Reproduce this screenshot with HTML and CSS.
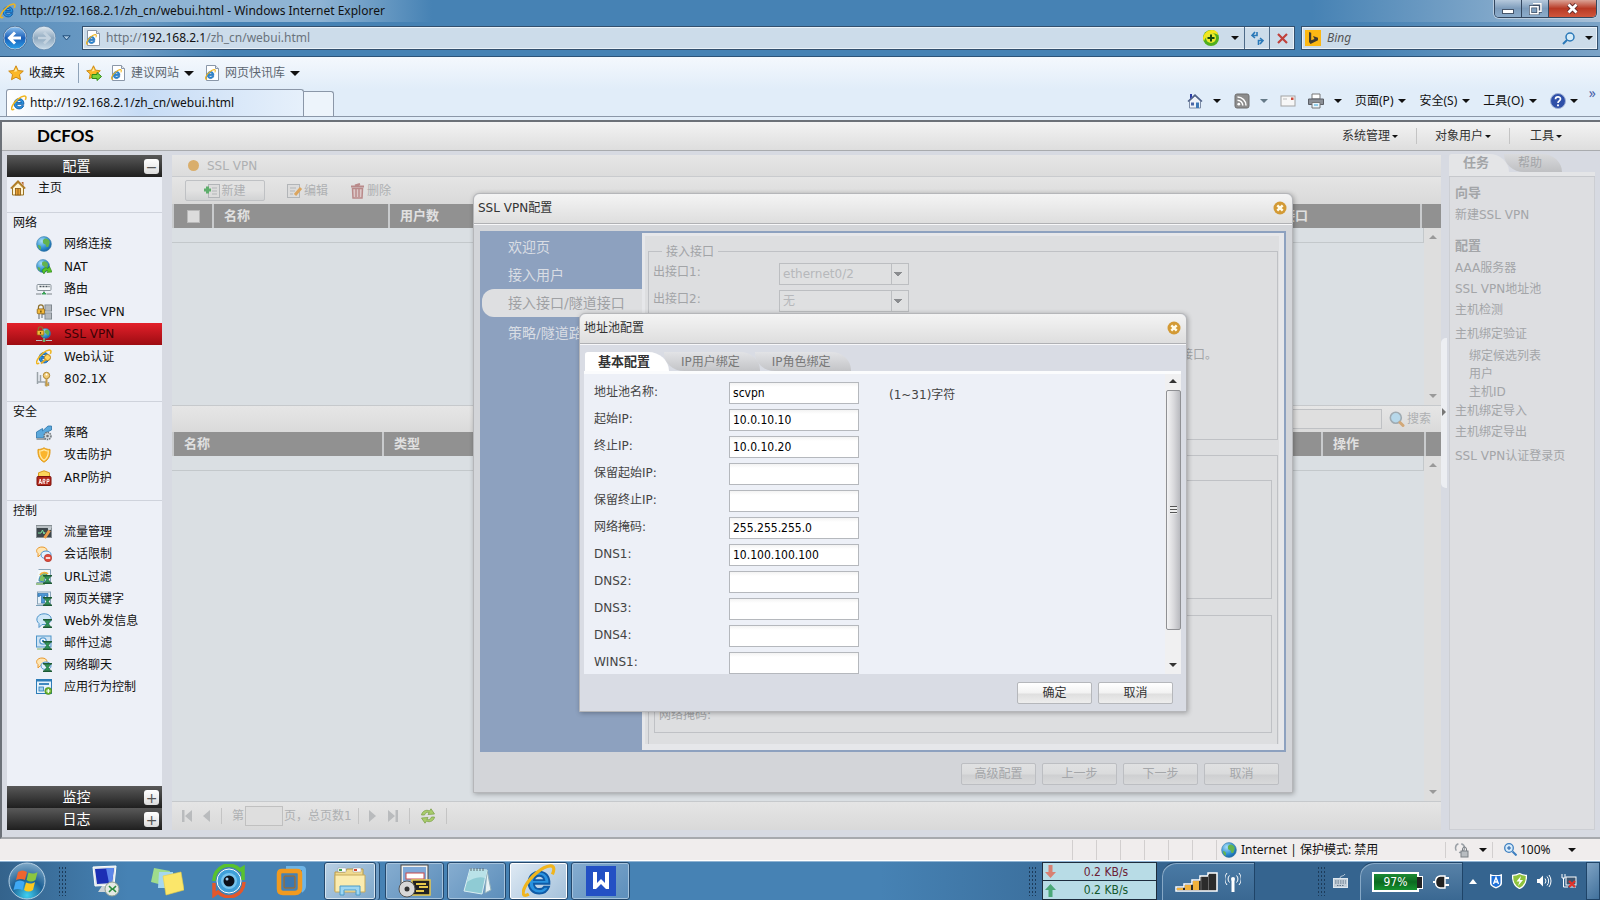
FILE: index.html
```
<!DOCTYPE html>
<html lang="zh-CN">
<head>
    <meta charset="utf-8">
    <meta name="viewport" content="width=device-width, initial-scale=1.0">
    <title>DCFOS</title>
    <link rel="stylesheet" href="styles.css">
</head>
<body>
    <!-- shared icons -->
    <svg class="sprite" aria-hidden="true">
        <defs>
            <linearGradient id="gBlue" x1="0" y1="0" x2="0" y2="1"><stop offset="0" stop-color="#8fc4f2"/><stop offset=".5" stop-color="#1b5fb8"/><stop offset="1" stop-color="#2aa0ea"/></linearGradient>
            <linearGradient id="gGrey" x1="0" y1="0" x2="0" y2="1"><stop offset="0" stop-color="#dfe8ef"/><stop offset=".5" stop-color="#8fa9c0"/><stop offset="1" stop-color="#c9dbe8"/></linearGradient>
            <radialGradient id="gGlobe" cx=".35" cy=".3" r=".8"><stop offset="0" stop-color="#a8defa"/><stop offset=".6" stop-color="#2f8fd0"/><stop offset="1" stop-color="#125a9c"/></radialGradient>
            <radialGradient id="gStart" cx=".5" cy=".9" r=".9"><stop offset="0" stop-color="#3fd0f0"/><stop offset=".5" stop-color="#1c5f94"/><stop offset="1" stop-color="#7fa9c8"/></radialGradient>
        </defs>
        <symbol id="i-ie" viewBox="0 0 16 16">
            <path d="M12.900 9.300H5.600c.1 1.600 1.200 2.500 2.600 2.500 1 0 1.800-.4 2.200-1.100h2.300c-.7 2-2.400 3.200-4.600 3.200-2.900 0-5-2.100-5-5.100s2.100-5.200 5-5.200c3 0 5 2.200 4.800 5.700zM5.700 7.600h4.800C10.300 6.300 9.400 5.500 8.100 5.500S5.900 6.300 5.700 7.600z" fill="#2a93e0" stroke="#0f5aa6" stroke-width=".9"/>
            <path d="M3.200 14.200C.5 15.800-.3 14 1.600 10.400 4 6 9.500 1.200 13.300.9c1.900-.1 2.100 1.700 1 4" fill="none" stroke="#f0b51e" stroke-width="1.500"/>
        </symbol>
        <symbol id="i-iepage" viewBox="0 0 16 16">
            <path d="M2.500.5h9l3 3v12h-12z" fill="#fff" stroke="#8a97a8"/><path d="M11.500.5v3h3" fill="#e3e8ee" stroke="#8a97a8"/>
            <use href="#i-ie" x="1" y="4" width="11" height="11"/>
        </symbol>
        <symbol id="i-star" viewBox="0 0 16 16"><path d="M8 .8l2.200 4.700 5.100.6-3.800 3.500 1 5.100L8 12.200l-4.500 2.500 1-5.100L.7 6.100l5.100-.6z" fill="#fcb827" stroke="#c98209" stroke-width=".9"/><path d="M8 3l1.300 3.200-3.300.6z" fill="#ffe9a0"/></symbol>
        <symbol id="i-globe" viewBox="0 0 16 16"><circle cx="8" cy="8" r="7.400" fill="url(#gGlobe)" stroke="#3b7da8" stroke-width=".6"/><path d="M7.500 3.500c2-1.800 4.500-1 6 1.500.6 2-.5 3.500-1 5.500-1 1-2.500.6-2.500-1S7 8 7 6.500s-.5-2 .5-3z" fill="#63b34e"/><path d="M2 9c1.500 0 3 1 3 2.500S5 14 4 13.500 2 11 2 9z" fill="#63b34e"/></symbol>
        <symbol id="i-lock" viewBox="0 0 16 16"><path d="M3 6V4a3 3 0 016 0v2" fill="none" stroke="#8c7030" stroke-width="1.500"/><rect x="1.500" y="6" width="9" height="6" rx="1" fill="#f3b93a" stroke="#8f6412"/><rect x="5.200" y="8" width="1.600" height="2.500" fill="#5a4008"/></symbol>
        <symbol id="i-nat" viewBox="0 0 16 16"><use href="#i-globe" width="14" height="14"/><path d="M6 12c1-3 4-4 6-2.500l1.500-2L16 13l-5 .5 1-1.500c-1.500-1-3 0-4 3z" fill="#56c528" stroke="#2a7d12" stroke-width=".6"/></symbol>
        <symbol id="i-route" viewBox="0 0 16 16"><rect x="1" y="3.500" width="14" height="6" rx="1" fill="#f6f8fa" stroke="#8a949c"/><path d="M3.500 5.500h2m1 0h2m1 0h2m1 0h1" stroke="#4b555c" stroke-width="1.500"/><path d="M0 13h5.500m5 0H16M8 9.500V12" stroke="#7c8489"/><path d="M6 13h4l-2-2z" fill="#3aa257" stroke="#3aa257"/></symbol>
        <symbol id="i-ipsec" viewBox="0 0 16 16"><rect x="9" y="1" width="6.500" height="6" fill="#c8cdd2" stroke="#7e868d"/><rect x="9" y="9" width="6.500" height="6" fill="#c8cdd2" stroke="#7e868d"/><path d="M9 3h6.500M9 5h6.500M9 11h6.500M9 13h6.500" stroke="#8f979d" stroke-width=".7"/><path d="M3 15v-5m3 4v-4h3" stroke="#7e868d" stroke-width="1.300" fill="none"/><use href="#i-lock" x="0" y="0" width="13" height="13"/></symbol>
        <symbol id="i-ssl" viewBox="0 0 16 16"><use href="#i-globe" x="4" y="2" width="11" height="11"/><use href="#i-lock" x="0" y="0" width="12" height="12"/><path d="M0 14.500h6m4 0h6M8 12v3" stroke="#b9bfc4"/><circle cx="8" cy="14.500" r="1.500" fill="#6bb36f"/></symbol>
        <symbol id="i-webauth" viewBox="0 0 16 16"><use href="#i-ie" width="16" height="16"/><circle cx="11.500" cy="8.500" r="3" fill="#ffd765" stroke="#b8851a"/><path d="M9.500 10.500L5 14.500" stroke="#e2ab2d" stroke-width="2"/></symbol>
        <symbol id="i-dot1x" viewBox="0 0 16 16"><path d="M1.500 1v12m0-2h3V4m0 7h5v4m3-4v4" stroke="#9aa2a8" stroke-width="1.500" fill="none"/><circle cx="10.500" cy="4.500" r="3.200" fill="#f2cd7a" stroke="#ad8530"/><path d="M10.500 8v7.500m0-2h2.500" stroke="#c79d48" stroke-width="2"/><circle cx="10.500" cy="3.600" r="1" fill="#fff"/></symbol>
        <symbol id="i-policy" viewBox="0 0 16 16"><path d="M.5 13V7l6-3.500V6L12 1h3.500v4L9 8v5z" fill="#5aa8dc" stroke="#2e74a8" stroke-width=".8"/><path d="M.5 14h9" stroke="#9aa2a8" stroke-width="2"/><circle cx="11.500" cy="11" r="3.500" fill="#d5dade" stroke="#6c747a" stroke-dasharray="1.500 .8" stroke-width="1.500"/><circle cx="11.500" cy="11" r="1.300" fill="#6c747a"/></symbol>
        <symbol id="i-shield" viewBox="0 0 16 16"><path d="M8 .8c2 1.300 4 1.700 6 1.600.3 6-1 10-6 12.800C3 12.400 1.700 8.400 2 2.400 4 2.500 6 2.100 8 .8z" fill="#fbb52c" stroke="#e09a1b"/><path d="M8 2.800c1.500 1 3 1.300 4.300 1.200.1 4.500-1 7.200-4.300 9.200-3.300-2-4.400-4.700-4.300-9.200C5 4.100 6.500 3.800 8 2.800z" fill="none" stroke="#ffe9a8" stroke-width="1.200"/></symbol>
        <symbol id="i-flow" viewBox="0 0 16 16"><rect x=".5" y="1.500" width="15" height="12" fill="#3d464b" stroke="#868e93"/><path d="M.5 3h15" stroke="#b9c0c4" stroke-width="2"/><path d="M2 9h3l1.500-3L8 10l1-2" fill="none" stroke="#7fe0a0"/><path d="M13.500 6.500L8.500 14" stroke="#e89b4a" stroke-width="3"/><path d="M12 5l3-.5" stroke="#c6cdd2" stroke-width="2.500"/></symbol>
        <symbol id="i-chat" viewBox="0 0 16 16"><path d="M6 1c3 0 5 1.500 5 3.800S9 8.500 6 8.500H4.500L2 11V7.500C-1 5 1 1 6 1z" fill="#ffe6b4" stroke="#e8982e"/><path d="M10 5c3 0 5 1.500 5 3.800s-1.500 3.700-5 3.700c-3.500 0-5-1.500-5-3.700S7 5 10 5z" fill="#e2f0fd" stroke="#4d93d0"/></symbol>
        <symbol id="i-talk" viewBox="0 0 16 16"><use href="#i-chat" width="16" height="16"/><circle cx="12" cy="12" r="3.700" fill="#de4a3c" stroke="#a52d22" stroke-width=".6"/><path d="M9.800 12h4.400" stroke="#fff" stroke-width="1.600"/></symbol>
        <symbol id="i-funnel" viewBox="0 0 10 10"><path d="M0 .8h10M0 9.200h10" stroke="#1d5b35" stroke-width="1.500"/><path d="M1.500 1.500h7L6 5l2.500 3.500h-7L4 5z" fill="#2f9456" stroke="#1d5b35" stroke-width=".7"/></symbol>
        <symbol id="i-url" viewBox="0 0 16 16"><path d="M2.500.5h12v13h-14" fill="#f3f8fb" stroke="#8aa4b8"/><path d="M0 15h9" stroke="#7db069" stroke-width="1.500"/><path d="M3 12c0-5 3-8 8-8l-3 9z" fill="#7fc15f" stroke="#3b86bb"/><path d="M4 6c2-3 6-3 8-1" fill="none" stroke="#f0b33a" stroke-width="1.800"/><use href="#i-funnel" x="7" y="6" width="9" height="9"/></symbol>
        <symbol id="i-key" viewBox="0 0 16 16"><rect x="1.500" y="1" width="13" height="12" fill="#e8f2fa" stroke="#8aa4b8"/><path d="M2 2.500h10v3h-1.500V4.500h-2V12H5.500V4.500h-2v1H2z" fill="#4c97d6" stroke="#1e65a5" stroke-width=".6"/><path d="M0 14.500h9" stroke="#7aa0b8"/><use href="#i-funnel" x="7" y="6" width="9" height="9"/></symbol>
        <symbol id="i-post" viewBox="0 0 16 16"><path d="M8 .8c4.500 0 7.200 2.200 7.200 5.400S12.500 11.500 8 11.500H6L3 14.500v-4C-1.500 7 1.500.8 8 .8z" fill="#cfe7f8" stroke="#4d93c8"/><use href="#i-funnel" x="7" y="6" width="9" height="9"/></symbol>
        <symbol id="i-mail" viewBox="0 0 16 16"><rect x=".5" y="1" width="14.500" height="11" fill="#cfe3f3" stroke="#4d93c8"/><circle cx="7" cy="6" r="3.200" fill="#fff" stroke="#5c9fd3" stroke-width="1.300"/><circle cx="7" cy="6" r="1.200" fill="#3b82bb"/><path d="M1 14h8" stroke="#7db069"/><use href="#i-funnel" x="7" y="6" width="9" height="9"/></symbol>
        <symbol id="i-im" viewBox="0 0 16 16"><use href="#i-chat" width="16" height="16"/><use href="#i-funnel" x="7" y="6" width="9" height="9"/></symbol>
        <symbol id="i-app" viewBox="0 0 16 16"><rect x=".5" y=".5" width="15" height="14" fill="#e6f2fb" stroke="#2d7db8"/><path d="M.5 1.500h15" stroke="#2d7db8" stroke-width="2"/><path d="M3 5h10" stroke="#2d7db8" stroke-width="1.800"/><rect x="3" y="8" width="4.500" height="4" fill="#9fd0ee" stroke="#2d7db8" stroke-width=".8"/><circle cx="12.300" cy="12" r="3.500" fill="#6ab32f" stroke="#3f7f14" stroke-width=".6"/><path d="M10.300 12h4m-2-2v4" stroke="#fff" stroke-width="1.200"/></symbol>
        <symbol id="i-house" viewBox="0 0 16 16"><path d="M11.500 2h2v4" fill="#b4602c"/><path d="M2.500 8v7h11V8L8 2.500z" fill="#fff3cf" stroke="#9b7424"/><path d="M.8 8.500L8 1.300l7.200 7.200" fill="none" stroke="#b07a20" stroke-width="1.700"/><rect x="5.500" y="8.500" width="5" height="6.500" fill="#e7a034" stroke="#875511" stroke-width=".8"/><path d="M8 8.500V15" stroke="#875511" stroke-width=".8"/></symbol>
        <symbol id="i-close" viewBox="0 0 14 14"><circle cx="7" cy="7" r="6.500" fill="#d39a35"/><path d="M4.300 4.300l5.400 5.400m0-5.400L4.300 9.700" stroke="#fffbe8" stroke-width="2.400"/></symbol>
        <symbol id="i-refresh" viewBox="0 0 16 16"><path d="M1.500 7C2 3.500 6 1 9.500 3L11 .8 14.500 6 8 6.500l1.200-2C6.800 3.800 5 5 4.500 7z" fill="#a9cc6c" stroke="#7fa34c" stroke-width=".8"/><path d="M14.500 9c-.5 3.500-4.500 6-8 4L5 15.200 1.500 10 8 9.500l-1.200 2C9.200 12.200 11 11 11.500 9z" fill="#a9cc6c" stroke="#7fa34c" stroke-width=".8"/></symbol>
        <symbol id="i-mag" viewBox="0 0 16 16"><circle cx="6.800" cy="6.800" r="5.500" fill="#b7d8ea" stroke="#a0abb2" stroke-width="1.600"/><path d="M11 11.500l3 3" stroke="#d2a878" stroke-width="3" stroke-linecap="round"/></symbol>
    </svg>

    <div class="titlebar">
        <svg class="ico"><use href="#i-ie"/></svg>
        <span class="title">http://192.168.2.1/zh_cn/webui.html - Windows Internet Explorer</span>
        <div class="win-buttons">
            <button aria-label="最小化"><svg width="12" height="10"><rect x=".5" y="5.500" width="11" height="4" fill="#fff" stroke="#46566b"/></svg></button>
            <button aria-label="还原"><svg width="13" height="12"><path d="M4 .8h8v7.500H9.500M1.500 3.800h7.500v7h-7.500z" fill="none" stroke="#3f5068" stroke-width="3"/><path d="M4 .8h8v7.500H9.500M1.500 3.800h7.500v7h-7.500z" fill="none" stroke="#fff" stroke-width="1.600"/></svg></button>
            <button class="win-close" aria-label="关闭"><svg width="13" height="11"><path d="M2.500 1.500l8 8m0-8l-8 8" stroke="#5b2424" stroke-width="4.500"/><path d="M2.500 1.500l8 8m0-8l-8 8" stroke="#fff" stroke-width="2.800"/></svg></button>
        </div>
    </div>

    <div class="navbar">
        <button class="round" aria-label="后退"><svg width="24" height="24" viewBox="0 0 24 24"><circle cx="12" cy="12" r="11.300" fill="url(#gBlue)" stroke="#dce9f4"/><circle cx="12" cy="12" r="11.800" fill="none" stroke="#2c4f78" stroke-width=".6"/><path d="M12 6.500L6.500 12l5.500 5.500M7 12h11" fill="none" stroke="#fff" stroke-width="3"/></svg></button>
        <button class="round" aria-label="前进"><svg width="24" height="24" viewBox="0 0 24 24"><circle cx="12" cy="12" r="11.300" fill="url(#gGrey)" stroke="#dce9f4"/><circle cx="12" cy="12" r="11.800" fill="none" stroke="#56789b" stroke-width=".6"/><path d="M12 6.500l5.500 5.500-5.500 5.500M6 12h11" fill="none" stroke="#c3d2df" stroke-width="2.600"/></svg></button>
        <svg class="hist" width="9" height="6"><path d="M.8.8h7.400L4.500 5z" fill="#a9c6df" stroke="#1c4a78"/></svg>
        <div class="address">
            <svg class="ico"><use href="#i-iepage"/></svg>
            <span class="url">http://<b>192.168.2.1</b>/zh_cn/webui.html</span>
            <svg class="ico compat"><circle cx="8" cy="8" r="8" fill="#4fae1c"/><path d="M0 9C0 4 4 0 9 0c4 0 6 3 6 5C12 2 4 3 1 11z" fill="#f5e51b"/><circle cx="8" cy="8" r="5" fill="#e9e92e"/><path d="M4.500 8h7M8 4.500v7" stroke="#174a10" stroke-width="2"/></svg>
            <i class="caret"></i>
            <button class="addr-btn" aria-label="刷新"><svg width="15" height="14"><path d="M5 1L2 4.500l3 2.500M2.500 4.500H7V1" fill="none" stroke="#2a78b8" stroke-width="1.600"/><path d="M10 13l3-3.500L10 7m3 2.500H8.500V14" fill="none" stroke="#2a78b8" stroke-width="1.600"/></svg></button>
            <button class="addr-btn" aria-label="停止"><svg width="13" height="13"><path d="M2 2l9 9m0-9l-9 9" stroke="#c0413c" stroke-width="2.200"/></svg></button>
        </div>
        <div class="search">
            <svg class="ico" viewBox="0 0 16 16"><rect width="16" height="16" fill="#fdb813"/><path d="M4 2l2.200.8v7.400L4 12zM6.200 10.200L9.500 9 8 6l5 1.800v2.400L5.500 14 4 12z" fill="#3f3a30"/></svg>
            <input type="text" placeholder="Bing" aria-label="Bing">
            <svg width="13" height="13"><circle cx="8" cy="5" r="4" fill="#d6ecf9" stroke="#2a78b8" stroke-width="1.500"/><path d="M5 8l-4 4" stroke="#2a78b8" stroke-width="2"/></svg>
            <i class="caret"></i>
        </div>
    </div>

    <div class="favbar">
        <svg class="ico"><use href="#i-star"/></svg><span class="dark">收藏夹</span>
        <span class="sep"></span>
        <svg class="ico" viewBox="0 0 16 16"><use href="#i-star" width="15" height="15"/><path d="M6 9.500h5V7.500l4.500 4-4.500 4v-2H6z" fill="#7ad23c" stroke="#2f8a17"/></svg>
        <a href="#sites"><svg class="ico"><use href="#i-iepage"/></svg>建议网站<i class="caret big"></i></a>
        <a href="#slices"><svg class="ico"><use href="#i-iepage"/></svg>网页快讯库<i class="caret big"></i></a>
    </div>

    <div class="tabbar">
        <div class="ie-tab"><svg class="ico"><use href="#i-ie"/></svg>http://192.168.2.1/zh_cn/webui.html</div>
        <div class="ie-newtab"></div>
        <div class="commands">
            <svg class="ico"><path d="M2.500 8v7h11V8L8 3z" fill="#eef2f8" stroke="#7d8ca6"/><path d="M1 8.500L8 2l7 6.500" fill="none" stroke="#4e6187" stroke-width="1.500"/><path d="M3 1v5l2-2V1z" fill="#2c3fa6"/><rect x="4" y="9.500" width="3" height="3" fill="#4b66a5"/><rect x="9" y="9.500" width="3" height="5.500" fill="#3e78b5"/></svg><i class="caret"></i>
            <svg class="ico rss"><rect x="1" y="1" width="14" height="14" rx="2" fill="#8d8d8d" stroke="#6f6f6f"/><circle cx="4.800" cy="11.200" r="1.400" fill="#fff"/><path d="M3.500 7.200a5.300 5.300 0 015.300 5.300M3.500 4a8.500 8.500 0 018.500 8.500" fill="none" stroke="#fff" stroke-width="1.500"/></svg><i class="caret pale"></i>
            <svg class="ico letter"><rect x="1" y="3" width="14" height="10" fill="#f7f7f7" stroke="#a3a3a3"/><rect x="11" y="4.500" width="2.500" height="2.500" fill="#cc4a3a"/><path d="M3 6h4" stroke="#bbb"/></svg>
            <svg class="ico"><path d="M4 1h8v5H4z" fill="#fff" stroke="#777"/><path d="M.5 6h15v5.500H.5z" fill="#8b8f96" stroke="#5b5f66"/><path d="M4 9.500h8V15H4z" fill="#eaf5fb" stroke="#777"/><path d="M6 12h4" stroke="#3ba5d9"/></svg><i class="caret"></i>
            <span>页面(P)<i class="caret"></i></span>
            <span>安全(S)<i class="caret"></i></span>
            <span>工具(O)<i class="caret"></i></span>
            <span class="help"><svg class="ico"><circle cx="8" cy="8" r="7.500" fill="#2e4fa8" stroke="#9fb0d4"/><path d="M5.500 6.200C5.500 3.200 10.500 3.200 10.500 6 10.500 8 8 7.800 8 10" fill="none" stroke="#fff" stroke-width="1.700"/><circle cx="8" cy="12.300" r="1.100" fill="#fff"/></svg><i class="caret"></i></span>
        </div>
        <span class="more">»</span>
    </div>

    <div class="app">
        <header class="app-header">
            <h1>DCFOS</h1>
            <nav>
                <a href="#system">系统管理<i class="caret small"></i></a>
                <a href="#object">对象用户<i class="caret small"></i></a>
                <a href="#tools">工具<i class="caret small"></i></a>
            </nav>
        </header>

        <div class="app-body">
            <aside class="sidebar">
                <div class="acc-head">配置<button aria-label="折叠">−</button></div>
                <div class="menu">
                    <a class="home" href="#home"><svg class="ico"><use href="#i-house"/></svg>主页</a>
                    <div class="group">
                        <h2>网络</h2>
                        <a href="#link"><svg class="ico"><use href="#i-globe"/></svg>网络连接</a>
                        <a class="tall" href="#nat"><svg class="ico"><use href="#i-nat"/></svg>NAT</a>
                        <a href="#route"><svg class="ico"><use href="#i-route"/></svg>路由</a>
                        <a class="tall" href="#ipsec"><svg class="ico"><use href="#i-ipsec"/></svg>IPSec VPN</a>
                        <a class="active" href="#sslvpn"><svg class="ico"><use href="#i-ssl"/></svg>SSL VPN</a>
                        <a class="tall" href="#webauth"><svg class="ico"><use href="#i-webauth"/></svg>Web认证</a>
                        <a href="#dot1x"><svg class="ico"><use href="#i-dot1x"/></svg>802.1X</a>
                    </div>
                    <div class="group">
                        <h2>安全</h2>
                        <a href="#policy"><svg class="ico"><use href="#i-policy"/></svg>策略</a>
                        <a href="#attack"><svg class="ico"><use href="#i-shield"/></svg>攻击防护</a>
                        <a class="tall" href="#arp"><svg class="ico" viewBox="0 0 16 16"><path d="M8 .8l5.500 2v5h-11v-5z" fill="#fcd55a" stroke="#d69a20"/><rect x="1" y="6.500" width="14" height="9" rx="1" fill="#b3271b" stroke="#7c130c"/><path d="M3 14l1.200-5L5.500 14M3.500 12.500h2M7 14V9.300h2v2H7.500L9 14M11 14V9.300h2v2.200h-2" fill="none" stroke="#fff" stroke-width=".9"/></svg>ARP防护</a>
                    </div>
                    <div class="group">
                        <h2>控制</h2>
                        <a href="#flow"><svg class="ico"><use href="#i-flow"/></svg>流量管理</a>
                        <a href="#session"><svg class="ico"><use href="#i-talk"/></svg>会话限制</a>
                        <a class="tall" href="#url"><svg class="ico"><use href="#i-url"/></svg>URL过滤</a>
                        <a href="#keyword"><svg class="ico"><use href="#i-key"/></svg>网页关键字</a>
                        <a href="#webpost"><svg class="ico"><use href="#i-post"/></svg>Web外发信息</a>
                        <a href="#mail"><svg class="ico"><use href="#i-mail"/></svg>邮件过滤</a>
                        <a href="#im"><svg class="ico"><use href="#i-im"/></svg>网络聊天</a>
                        <a href="#behavior"><svg class="ico"><use href="#i-app"/></svg>应用行为控制</a>
                    </div>
                </div>
                <div class="acc-head">监控<button aria-label="展开监控">+</button></div>
                <div class="acc-head">日志<button aria-label="展开日志">+</button></div>
            </aside>

            <main class="panel">
                <div class="panel-title"><i class="dot"></i>SSL VPN</div>
                <div class="toolbar">
                    <button class="new" disabled><svg class="ico"><rect x="4.500" y="1.500" width="11" height="13" fill="#dcdcdc" stroke="#b2b5b8"/><path d="M8 5h5M8 8h5M8 11h5" stroke="#b2b5b8"/><path d="M0 7h7M3.500 3.500v7" stroke="#5fae6c" stroke-width="3"/></svg>新建</button>
                    <button disabled><svg class="ico"><rect x=".5" y="1.500" width="12" height="13" fill="#dcdcdc" stroke="#b2b5b8"/><path d="M3 5h6M3 8h5M3 11h3" stroke="#b2b5b8"/><path d="M14 5l-6 7" stroke="#dba55e" stroke-width="3"/></svg>编辑</button>
                    <button disabled><svg class="ico"><path d="M1 3.500h13M5 2.500L10 1" stroke="#b98a8a" stroke-width="2"/><path d="M2.500 5.500h10L12 15H3z" fill="#dcc8c8" stroke="#b98a8a" stroke-width="1.500"/><path d="M6 6v8M9 6v8" stroke="#b98a8a" stroke-width="1.500"/></svg>删除</button>
                </div>
                <table class="grid">
                    <colgroup><col class="c-check"><col class="c-name"><col><col class="c-port"><col class="c-scroll"></colgroup>
                    <tr><th><input type="checkbox" aria-label="全选" disabled></th><th>名称</th><th>用户数</th><th>接口</th><th></th></tr>
                </table>
                <div class="grid-body upper"><div class="row-line"></div><div class="vscroll"><i class="up"></i><i class="down"></i></div></div>
                <div class="searchbar"><input type="text" aria-label="搜索内容" disabled><svg class="ico"><use href="#i-mag"/></svg><span>搜索</span></div>
                <table class="grid">
                    <colgroup><col class="c-name2"><col><col class="c-action"><col class="c-scroll2"></colgroup>
                    <tr><th>名称</th><th>类型</th><th>操作</th><th></th></tr>
                </table>
                <div class="grid-body lower"><div class="row-line"></div><div class="vscroll"><i class="up"></i><i class="down"></i></div></div>
                <div class="pager">
                    <svg width="12" height="12"><path d="M1 0h2.500v12H1zM11 0v12L4 6z"/></svg>
                    <svg width="8" height="12"><path d="M7 0v12L0 6z"/></svg>
                    <i class="bar"></i>
                    <label>第<input type="text" disabled>页，总页数1</label>
                    <i class="bar"></i>
                    <svg width="8" height="12"><path d="M0 0v12l7-6z"/></svg>
                    <svg width="12" height="12"><path d="M8.500 0H11v12H8.500zM1 0v12l7-6z"/></svg>
                    <i class="bar"></i>
                    <svg class="ico"><use href="#i-refresh"/></svg>
                    <i class="bar"></i>
                </div>
            </main>

            <div class="splitter"><span></span></div>

            <aside class="tasks">
                <div class="tabs"><button class="on">任务</button><button>帮助</button></div>
                <div class="task-body">
                    <h3>向导</h3>
                    <a href="#new">新建SSL VPN</a>
                    <h3>配置</h3>
                    <a href="#aaa">AAA服务器</a>
                    <a href="#pool">SSL VPN地址池</a>
                    <a href="#check">主机检测</a>
                    <a class="wide" href="#bind">主机绑定验证</a>
                    <a class="sub" href="#cand">绑定候选列表</a>
                    <a class="sub" href="#user">用户</a>
                    <a class="sub" href="#hostid">主机ID</a>
                    <a href="#import">主机绑定导入</a>
                    <a href="#export">主机绑定导出</a>
                    <a class="wide" href="#login">SSL VPN认证登录页</a>
                </div>
            </aside>
        </div>
    </div>

    <footer class="status">
        <div class="cells"><i></i><i></i><i></i><i></i><i></i><i></i><i></i></div>
        <div class="zone"><svg class="ico"><use href="#i-globe"/></svg>Internet | 保护模式: 禁用</div>
        <div class="protect"><svg class="ico"><circle cx="6" cy="6" r="4.500" fill="none" stroke="#9aa0a6" stroke-width="1.500" stroke-dasharray="8 3"/><rect x="7" y="9" width="7" height="6" fill="#b8bcc0" stroke="#7b8085"/><path d="M8.500 9V7a2 2 0 014 0v2" fill="none" stroke="#7b8085"/></svg><i class="caret"></i></div>
        <div class="zoom"><svg width="13" height="13"><circle cx="5" cy="5" r="4.300" fill="#d8ecfb" stroke="#3d7fc0" stroke-width="1.300"/><path d="M3 5h4M5 3v4" stroke="#1f5fa8"/><path d="M8.500 8.500l4 4" stroke="#3d7fc0" stroke-width="2"/></svg>100%<i class="caret"></i></div>
    </footer>

    <div class="taskbar">
        <button class="start" aria-label="开始"><svg width="38" height="38" viewBox="0 0 38 38"><circle cx="19" cy="19" r="18" fill="url(#gStart)" stroke="#b5cfe2"/><path d="M10 10c3-2 6-2 9 0l-2 8c-3-1.500-6-1.500-9 0z" fill="#f0652f"/><path d="M20.500 10.500c3 1.500 6 1.500 9-.5l-2 8c-3 2-6 2-9 0z" fill="#8cc63f"/><path d="M7.500 20c3-2 6-2 9 0l-2 8c-3-1.500-6-1.500-9 0z" fill="#3fa9f5"/><path d="M18 20.500c3 1.500 6 1.500 9-.5l-2 8c-3 2-6 2-9 0z" fill="#fcc81f"/></svg></button>
        <i class="grip"></i>
        <div class="pins">
            <svg width="34" height="34" viewBox="0 0 34 34"><path d="M5 3l23-1-2 19-19 1z" fill="#dfe6ea" stroke="#fff"/><path d="M7 5l19-1-2 15-15 1z" fill="#1c2fb4"/><path d="M18 4l8 0-2 15-3 0z" fill="#5d87ea"/><path d="M14 22h6l2 6H10z" fill="#ccd3d7"/><circle cx="24" cy="25" r="7" fill="#e4e9e4" stroke="#90a090"/><path d="M21 22l3 3-3 3m7-6l-3 3 3 3" fill="none" stroke="#2b8b3f" stroke-width="1.600"/></svg>
            <svg width="34" height="34" viewBox="0 0 34 34"><path d="M4 4l16 3-4 15L1 18z" fill="#9fdc8c"/><path d="M9 8l14 0v16H8z" fill="#a5d7ef"/><path d="M13 12l18-4 3 18-18 5z" fill="#fbe66a" stroke="#e8cf45" stroke-width=".6"/></svg>
            <svg width="34" height="34" viewBox="0 0 34 34"><path d="M2 17A15 15 0 0128 6l3-2v12" fill="none" stroke="#58c22e" stroke-width="3.500"/><path d="M32 18A15 15 0 016 28l-4 3V19" fill="none" stroke="#e4572b" stroke-width="3.500"/><circle cx="17" cy="17" r="12" fill="#3f9fd8" stroke="#fff"/><circle cx="17" cy="17" r="8" fill="#77c5ee"/><circle cx="17" cy="17" r="5.500" fill="#0c1018"/><circle cx="15" cy="15" r="1.500" fill="#9cc8e8"/></svg>
            <svg width="34" height="34" viewBox="0 0 34 34"><path d="M12 4h16q2 0 2 2v16q0 3-3 5" fill="none" stroke="#6db4e6" stroke-width="4"/><path d="M8 7h15q3 0 3 3v14q0 5-5 5H9q-4 0-4-4V10q0-3 3-3z" fill="none" stroke="#f09a20" stroke-width="4.500"/><rect x="10" y="12" width="11" height="12" rx="1" fill="#3c78b0" stroke="#b8680c"/></svg>
        </div>
        <div class="wins">
            <button class="stack" aria-label="资源管理器"><svg width="34" height="34" viewBox="0 0 34 34"><path d="M2 8h10l2-3h16v22H2z" fill="#f0d98e" stroke="#b89a49"/><path d="M5 4h8v4H5zM20 4h8v4h-8z" fill="#fff" stroke="#999" stroke-width=".5"/><path d="M6 5h3v2H6z" fill="#3fa34a"/><path d="M21 5h3v2h-3z" fill="#d4472e"/><path d="M2 11h30v17H2z" fill="#fbecb0" stroke="#c7aa5a"/><path d="M7 31V22h20v9h-4v-5H11v5z" fill="#9fd7f2" stroke="#4b9bc8"/></svg></button>
            <button aria-label="安装程序"><svg width="34" height="34" viewBox="0 0 34 34"><rect x="3" y="1" width="27" height="25" fill="#f0f0ee" stroke="#444"/><rect x="5" y="3" width="23" height="20" fill="#7fa9d8"/><rect x="8" y="9" width="18" height="6" fill="#fff" stroke="#cc4b4b"/><rect x="14" y="16" width="18" height="15" fill="#222" stroke="#e6c84c" stroke-width="1.500"/><path d="M18 20h10m-7 3h9m-12 4h8" stroke="#e6c84c" stroke-width="2"/><circle cx="9" cy="25" r="8" fill="#d8d8d8" stroke="#555"/><circle cx="9" cy="25" r="2.500" fill="#333"/></svg></button>
            <button aria-label="记事本"><svg width="34" height="34" viewBox="0 0 34 34"><path d="M27 6l4 20-6 3z" fill="#e8f2f4" stroke="#8fb0ba"/><path d="M10 5l17 1-5 24-18-3z" fill="#8fcbd4" stroke="#d9eef2"/><path d="M10 5l17 1-2 8C18 12 12 15 7 18z" fill="#b9e2e8"/><path d="M11 4v3m3-3v3m3-3v3m3-3v3m3-3v3" stroke="#5d6d73"/></svg></button>
            <button class="current" aria-label="Internet Explorer"><svg width="34" height="34"><use href="#i-ie" width="34" height="34"/></svg></button>
            <button aria-label="WPS 文字"><svg width="32" height="32" viewBox="0 0 32 32"><rect x="1" y="1" width="30" height="30" fill="#2350c4"/><path d="M8 7h4v11l4-4 4 4V7h4v17h-3l-5-5-5 5H8z" fill="#fff"/></svg></button>
        </div>
        <i class="grip"></i>
        <div class="net">
            <div class="down-rate"><svg width="11" height="14"><path d="M3.500 0h4v7H11l-5.500 6L0 7h3.500z" fill="#d88072"/></svg><span>0.2 KB/s</span></div>
            <div class="up-rate"><svg width="11" height="14"><path d="M3.500 14h4V7H11L5.500 1 0 7h3.500z" fill="#4aa878"/></svg><span>0.2 KB/s</span></div>
        </div>
        <div class="tray signal">
            <svg width="44" height="20"><path d="M1 19v-4h8v-3h8V8h8V4h8V1h9v18z" fill="#2b2b2b" stroke="#fff" stroke-width="1.500"/><path d="M2 16h6v2H2zM10 13h6v5h-6zM18 9h6v9h-6z" fill="#f0b13c"/><path d="M26 5v13M33.500 3v15" stroke="#666"/></svg>
            <svg width="16" height="20"><path d="M8 8v12" stroke="#fff" stroke-width="3"/><circle cx="8" cy="7" r="2" fill="#fff"/><path d="M4.500 3.500a5 5 0 000 7m7-7a5 5 0 010 7M2 1a9 9 0 000 12M14 1a9 9 0 010 12" fill="none" stroke="#fff"/></svg>
        </div>
        <i class="grip far"></i>
        <svg class="kbd" width="15" height="14"><path d="M7 4c0-3 4-1 5-4" fill="none" stroke="#b5c6d6"/><rect x=".5" y="4.500" width="14" height="9" fill="#c3ced8" stroke="#dfe8ef"/><path d="M2 7h11M2 9h11M4 11.500h7" stroke="#5f7488" stroke-dasharray="1.500 1"/></svg>
        <div class="tray power">
            <span class="battery">97%</span>
            <svg width="17" height="14"><path d="M16 3h-4m4 7h-4M0 7h4" stroke="#fff" stroke-width="2"/><path d="M12 1v12H7C1 12 1 2 7 1z" fill="#222" stroke="#fff" stroke-width="1.400"/></svg>
        </div>
        <div class="icons">
            <svg width="8" height="5"><path d="M0 5l4-5 4 5z" fill="#fff"/></svg>
            <svg width="14" height="16" viewBox="0 0 14 16"><path d="M1 1l3 1h6l3-1v9c0 3-3 4-6 5.500C4 14 1 13 1 10z" fill="#fff"/><path d="M2.500 3h9v7c0 2-2 3-4.500 4-2.500-1-4.500-2-4.500-4z" fill="#1e6fd6"/><path d="M4.500 11L7 4.500 9.500 11M5.500 9h3" fill="none" stroke="#fff" stroke-width="1.400"/></svg>
            <svg width="15" height="16" viewBox="0 0 15 16"><path d="M7.500.5C10 2 12 2.300 14.500 2.300c0 6-1 10.500-7 13.200C1.500 12.800.5 8.300.5 2.300 3 2.300 5 2 7.500.5z" fill="#8fc33d" stroke="#fff" stroke-width="1.300"/><path d="M9 3L4.500 8.500h3L6 13l5-6H8z" fill="#fff"/></svg>
            <svg width="16" height="14"><path d="M1 5h2.500L7 1.500v11L3.500 9H1z" fill="#fff"/><path d="M9 4.500a4 4 0 010 5M11 2.500a7 7 0 010 9M13 1a10 10 0 010 12" fill="none" stroke="#fff"/></svg>
            <svg width="16" height="16"><rect x="5" y="4" width="10" height="8" fill="#3a5570" stroke="#fff"/><path d="M1 1v4h3V1M2.500 5v9H7m2 0h6" fill="none" stroke="#fff"/><path d="M8 8l6 6m0-6l-6 6" stroke="#e0322a" stroke-width="2.200"/></svg>
        </div>
        <button class="desktop" aria-label="显示桌面"></button>
    </div>

    <!-- SSL VPN wizard -->
    <section class="dialog wizard">
        <header>SSL VPN配置<button aria-label="关闭向导"><svg width="14" height="14"><use href="#i-close"/></svg></button></header>
        <div class="wizard-frame">
            <ol class="steps">
                <li>欢迎页</li>
                <li>接入用户</li>
                <li class="on">接入接口/隧道接口</li>
                <li>策略/隧道路由</li>
            </ol>
            <div class="wizard-page">
                <fieldset class="access">
                    <legend>接入接口</legend>
                    <div class="pick"><label for="if1">出接口1:</label><select id="if1" disabled><option>ethernet0/2</option></select></div>
                    <div class="pick"><label for="if2">出接口2:</label><select id="if2" disabled><option>无</option></select></div>
                    <p>接口。</p>
                </fieldset>
                <fieldset class="tunnel">
                    <div class="box"></div>
                    <div class="box"><span>网络掩码:</span></div>
                </fieldset>
            </div>
        </div>
        <div class="buttons">
            <button disabled>高级配置</button>
            <button disabled>上一步</button>
            <button disabled>下一步</button>
            <button disabled>取消</button>
        </div>
    </section>

    <!-- address pool -->
    <section class="dialog pool">
        <header>地址池配置<button aria-label="关闭"><svg width="14" height="14"><use href="#i-close"/></svg></button></header>
        <div class="tabs"><button class="on">基本配置</button><button>IP用户绑定</button><button>IP角色绑定</button></div>
        <div class="pool-body">
            <form>
                <div class="field"><label for="name">地址池名称:</label><input id="name" type="text" value="scvpn"><span>(1~31)字符</span></div>
                <div class="field"><label for="start">起始IP:</label><input id="start" type="text" value="10.0.10.10"></div>
                <div class="field"><label for="end">终止IP:</label><input id="end" type="text" value="10.0.10.20"></div>
                <div class="field"><label for="rstart">保留起始IP:</label><input id="rstart" type="text"></div>
                <div class="field"><label for="rend">保留终止IP:</label><input id="rend" type="text"></div>
                <div class="field"><label for="mask">网络掩码:</label><input id="mask" type="text" value="255.255.255.0"></div>
                <div class="field"><label for="dns1">DNS1:</label><input id="dns1" type="text" value="10.100.100.100"></div>
                <div class="field"><label for="dns2">DNS2:</label><input id="dns2" type="text"></div>
                <div class="field"><label for="dns3">DNS3:</label><input id="dns3" type="text"></div>
                <div class="field"><label for="dns4">DNS4:</label><input id="dns4" type="text"></div>
                <div class="field"><label for="wins1">WINS1:</label><input id="wins1" type="text"></div>
            </form>
            <div class="scrollbar"><i class="up"></i><div class="thumb"><b></b></div><i class="down"></i></div>
        </div>
        <div class="buttons">
            <button>确定</button>
            <button>取消</button>
        </div>
    </section>
</body>
</html>
```
FILE: styles.css
```
* {
    box-sizing: border-box;
}

body {
    margin: 0;
    height: 100vh;
    display: flex;
    flex-direction: column;
    overflow: hidden;
    background: #e1edf9;
    color: #111;
    font: 12px/16px "DejaVu Sans", "Noto Sans CJK SC", sans-serif;
}

button, input, select {
    font: inherit;
    color: inherit;
    margin: 0;
}

button {
    padding: 0;
    border: none;
    background: none;
}

a {
    color: inherit;
    text-decoration: none;
}

svg {
    display: block;
    flex: none;
}

.sprite {
    position: absolute;
    width: 0;
    height: 0;
}

.ico {
    width: 16px;
    height: 16px;
}

.caret {
    display: inline-block;
    flex: none;
    border: 4px solid transparent;
    border-top-color: #111;
    border-bottom: none;
}

.caret.big {
    border-width: 5px;
    border-bottom: none;
}

.caret.small {
    border-width: 3px;
    border-bottom: none;
    margin-left: 2px;
    vertical-align: 2px;
}

.caret.pale {
    border-top-color: #667a88;
}

/* browser window */
.titlebar, .navbar, .favbar, .tabbar, .status {
    font-family: "Noto Sans", "Noto Sans CJK SC", sans-serif;
}

.titlebar {
    display: flex;
    align-items: center;
    height: 22px;
    background: linear-gradient(90deg, #6f9fc8, #8fb4d4 8%, #8fb4d4 20%, #4682b4 27%, #4682b4 82%, #7ea6c9 93%, #a9c1d8);
}

.title {
    margin-left: 4px;
}

.win-buttons {
    display: flex;
    align-self: flex-start;
    margin: 0 3px 0 auto;
    border: 1px solid #33475f;
    border-top: none;
    border-radius: 0 0 5px 5px;
    overflow: hidden;
    box-shadow: 0 0 0 1px #b9cde0;
}

.win-buttons button {
    display: flex;
    align-items: center;
    justify-content: center;
    width: 27px;
    height: 17px;
    border-right: 1px solid #33475f;
    background: linear-gradient(#b6c9dc, #7d9cbb 50%, #8caccb);
}

.win-buttons .win-close {
    width: 47px;
    border-right: none;
    background: linear-gradient(#dba396, #b83a25 50%, #d0563c);
}

.navbar {
    display: flex;
    align-items: center;
    height: 35px;
    padding: 0 2px 2px 3px;
    background: linear-gradient(90deg, #5c90bd, #6c9bc4 8%, #4682b4 14%, #4682b4 85%, #7ba3c7);
    border-bottom: 1px solid #2c5378;
}

.round {
    margin-right: 5px;
}

.hist {
    margin: 0 11px 0 1px;
}

.address, .search {
    display: flex;
    align-items: center;
    height: 24px;
    background: #ccdcea;
    border: 1px solid #33506e;
    box-shadow: inset 0 0 0 1px #eaf2f9;
}

.address {
    flex: 1;
    padding-left: 2px;
}

.url {
    flex: 1;
    margin-left: 5px;
    color: #6a737c;
}

.url b {
    font-weight: normal;
    color: #111;
}

.compat {
    margin-right: 12px;
}

.addr-btn {
    display: flex;
    align-items: center;
    justify-content: center;
    width: 25px;
    height: 22px;
    border-left: 1px solid #4d6a88;
}

.address .caret {
    margin-right: 5px;
}

.search {
    width: 297px;
    margin-left: 6px;
    padding: 0 4px 0 3px;
}

.search input {
    flex: 1;
    min-width: 0;
    margin: 0 6px;
    padding: 0;
    border: none;
    background: none;
}

.search input::placeholder {
    color: #555;
    font-style: italic;
}

.search .caret {
    margin-left: 10px;
}

.favbar {
    display: flex;
    align-items: center;
    height: 32px;
    padding-left: 8px;
    background: linear-gradient(#f4f8fd, #e1edf9);
    color: #5c6670;
}

.favbar a {
    display: flex;
    align-items: center;
    margin-right: 10px;
}

.favbar a .ico {
    margin-right: 5px;
}

.favbar a .caret {
    margin-left: 5px;
}

.favbar > .ico + a {
    margin-left: 8px;
}

.dark {
    margin-left: 5px;
    color: #111;
}

.favbar .sep {
    width: 1px;
    height: 20px;
    margin: 0 7px 0 13px;
    background: #8fa3b8;
}

.tabbar {
    display: flex;
    align-items: flex-end;
    height: 28px;
    padding-left: 6px;
    border-bottom: 1px solid #8b97a8;
}

.ie-tab {
    display: flex;
    align-items: center;
    width: 298px;
    height: 27px;
    padding-left: 4px;
    border: 1px solid #8b97a8;
    border-bottom: none;
    border-radius: 3px 3px 0 0;
    background: linear-gradient(90deg, #fff, #c7dcf5 45%, #e6f0fb);
}

.ie-tab .ico {
    margin-right: 3px;
}

.ie-newtab {
    width: 30px;
    height: 25px;
    border: 1px solid #8b97a8;
    border-left: none;
    border-bottom: none;
    border-radius: 0 3px 0 0;
    background: #edf4fb;
}

.commands {
    display: flex;
    align-items: center;
    height: 31px;
    margin-left: auto;
}

.commands .caret {
    margin: 0 13px 0 10px;
}

.commands .rss + .caret {
    margin-right: 12px;
}

.commands .letter {
    margin-right: 12px;
}

.commands span {
    display: flex;
    align-items: center;
}

.commands span .caret {
    margin: 0 13px 0 5px;
}

.commands .help .caret {
    margin: 0 11px 0 4px;
}

.more {
    align-self: flex-start;
    margin-right: 4px;
    color: #4a5fa8;
    font-size: 14px;
    line-height: 8px;
}

/* device web ui */
.app {
    flex: 1;
    min-height: 0;
    display: flex;
    flex-direction: column;
    margin-top: 3px;
    border: 2px solid #6c7178;
    border-bottom-color: #a7a9ad;
    border-right: none;
    background: #d7dae2;
}

.app-header {
    flex: none;
    display: flex;
    align-items: center;
    height: 29px;
    background: linear-gradient(#f3f3f3, #dedede);
    border-bottom: 1px solid #a9abae;
}

.app-header h1 {
    margin: 0 0 0 35px;
    font: bold 17px/22px Lato, sans-serif;
    color: #000;
}

.app-header nav {
    display: flex;
    margin-left: auto;
    padding-right: 20px;
    color: #333;
}

.app-header nav a {
    padding: 0 18px;
    border-right: 1px solid #c4c4c4;
}

.app-header nav a:last-child {
    border: none;
    padding-left: 20px;
}

.app-body {
    flex: 1;
    min-height: 0;
    display: flex;
    padding: 4px 5px 7px;
}

.sidebar {
    flex: none;
    display: flex;
    flex-direction: column;
    width: 155px;
    margin-right: 10px;
}

.acc-head {
    flex: none;
    display: flex;
    align-items: center;
    justify-content: center;
    position: relative;
    height: 22px;
    padding-right: 16px;
    background: linear-gradient(#595959, #1f1f1f);
    color: #fff;
    font-size: 14px;
}

.acc-head button {
    position: absolute;
    right: 3px;
    top: 4px;
    width: 15px;
    height: 15px;
    border-radius: 3px;
    background: linear-gradient(#fff, #dcdcdc);
    color: #555;
    line-height: 14px;
}

.menu {
    flex: 1;
    min-height: 0;
    overflow: hidden;
    background: #edf0f7;
}

.menu a {
    display: flex;
    align-items: center;
    height: 22px;
    padding-left: 29px;
}

.menu a .ico {
    margin-right: 12px;
}

.menu .tall {
    height: 23px;
}

.menu .home {
    padding-left: 3px;
    margin-bottom: 13px;
}

.group {
    border-top: 1px solid #cfd3dc;
    padding-bottom: 11px;
}

.group h2 {
    margin: 0;
    padding-left: 6px;
    font: inherit;
    line-height: 20px;
}

.menu .active {
    background: linear-gradient(#e3202a, #9d0c12);
    color: #3c0206;
}

.panel {
    flex: 1;
    min-width: 0;
    display: flex;
    flex-direction: column;
    background: #dadfe3;
    color: #aeb0b2;
}

.panel-title {
    flex: none;
    display: flex;
    align-items: center;
    height: 22px;
    padding-left: 16px;
    background: linear-gradient(#e6e6e6, #dcdcdc);
    border-bottom: 1px solid #c9cbce;
}

.dot {
    width: 11px;
    height: 11px;
    margin-right: 8px;
    border-radius: 50%;
    background: #d9ae6c;
}

.toolbar {
    flex: none;
    display: flex;
    align-items: center;
    height: 27px;
    padding-left: 13px;
    background: linear-gradient(#e5e5e5, #d9d9d9);
}

.toolbar button {
    display: flex;
    align-items: center;
    gap: 1px;
    margin-right: 22px;
}

.toolbar .new {
    justify-content: center;
    width: 80px;
    height: 21px;
    border: 1px solid #bfc1c4;
    border-radius: 2px;
    background: linear-gradient(#e2e2e2 50%, #d2d3d4);
}

.grid {
    flex: none;
    width: 100%;
    table-layout: fixed;
    border-collapse: collapse;
}

.grid th {
    height: 24px;
    padding: 0 0 0 10px;
    border-left: 2px solid #c9cbcd;
    background: #919191;
    color: #e0e0e0;
    font-size: 13px;
    text-align: left;
}

.grid input {
    display: block;
    width: 13px;
    height: 13px;
    margin-left: 3px;
    appearance: none;
    background: #dcdcdc;
    border: 1px solid #b9b9b9;
}

.c-check {
    width: 40px;
}

.c-name {
    width: 176px;
}

.c-port {
    width: 150px;
}

.c-scroll {
    width: 20px;
}

.c-name2 {
    width: 210px;
}

.c-action {
    width: 103px;
}

.c-scroll2 {
    width: 16px;
}

.grid-body {
    display: flex;
    min-height: 0;
    border-bottom: 1px solid #c6c9cc;
}

.upper {
    flex: 178;
}

.lower {
    flex: 347;
}

.row-line {
    flex: 1;
    height: 15px;
    border: 1px solid #c3c8cb;
    border-width: 0 1px 1px 0;
}

.vscroll {
    display: flex;
    flex-direction: column;
    justify-content: space-between;
    align-items: center;
    width: 17px;
    padding: 7px 0;
    background: #dedede;
}

.up, .down {
    border: 4px solid transparent;
}

.up {
    border-bottom-color: #999;
    border-top: none;
}

.down {
    border-top-color: #999;
    border-bottom: none;
}

.searchbar {
    flex: none;
    display: flex;
    align-items: center;
    justify-content: flex-end;
    height: 26px;
    padding-right: 10px;
    background: linear-gradient(#e6e6e6, #dadada);
}

.searchbar input {
    width: 240px;
    height: 20px;
    border: 1px solid #bfc1c4;
    background: #dfdfdf;
}

.searchbar .ico {
    margin: 0 2px 0 7px;
}

.pager {
    flex: none;
    display: flex;
    align-items: center;
    gap: 10px;
    height: 28px;
    padding-left: 9px;
    background: linear-gradient(#e5e5e5, #d9d9d9);
}

.pager svg {
    fill: #b9bbbd;
}

.pager .bar {
    width: 1px;
    height: 16px;
    background: #c4c4c4;
}

.pager label {
    display: flex;
    align-items: center;
    margin-right: -4px;
}

.pager input {
    width: 38px;
    height: 20px;
    margin: 0 1px;
    border: 1px solid #c0c0c0;
    background: #dedede;
}

.splitter {
    flex: none;
    display: flex;
    align-items: center;
    width: 8px;
}

.splitter span {
    width: 6px;
    height: 150px;
    margin-bottom: 160px;
    border-radius: 5px 0 0 5px;
    background: #eceef2;
}

.splitter span::before {
    content: "";
    display: block;
    margin: 70px 0 0 1px;
    border: 4px solid transparent;
    border-left-color: #777;
    border-right: none;
}

.tasks {
    flex: none;
    display: flex;
    flex-direction: column;
    width: 146px;
    color: #a3a5a8;
}

.tabs {
    display: flex;
    align-items: flex-end;
}

.tabs button {
    height: 18px;
    margin-left: -5px;
    padding: 0 17px 0 14px;
    border-radius: 0 20px 0 20px / 0 18px 0 18px;
    background: linear-gradient(#d9dadc, #bfc0c3);
}

.tabs .on {
    margin-left: 0;
    border-radius: 3px 22px 0 0 / 3px 20px 0 0;
    background: #e4e5e7;
    font-weight: bold;
    font-size: 13px;
}

.tasks .tabs {
    height: 22px;
    padding-bottom: 4px;
    border-bottom: 1px solid #c6c8cc;
    box-shadow: inset 0 -4px #e4e5e7;
}

.tasks .tabs button {
    padding-right: 20px;
}

.task-body {
    flex: 1;
    padding: 4px 0 0 5px;
    background: #dddee1;
    border: 1px solid #ccced3;
    border-top: none;
}

.task-body h3 {
    margin: 0;
    font-size: 13px;
    line-height: 24px;
}

.task-body a {
    display: block;
    line-height: 21px;
}

.task-body a + h3 {
    margin-top: 8px;
}

.task-body .wide {
    line-height: 26px;
}

.task-body .sub {
    padding-left: 14px;
    line-height: 18px;
}

.status {
    flex: none;
    display: flex;
    align-items: center;
    height: 22px;
    border-bottom: 1px solid #fff;
    background: #f0eded;
}

.cells {
    display: flex;
    gap: 23px;
    margin-left: auto;
}

.cells i {
    width: 1px;
    height: 20px;
    background: #d2cfcf;
}

.zone {
    display: flex;
    align-items: center;
    width: 228px;
    padding-left: 4px;
}

.zone .ico {
    margin-right: 4px;
}

.protect {
    display: flex;
    align-items: center;
    gap: 9px;
    width: 48px;
    padding-left: 8px;
    border-left: 1px solid #d2cfcf;
    border-right: 1px solid #d2cfcf;
}

.zoom {
    display: flex;
    align-items: center;
    width: 107px;
    padding-left: 11px;
}

.zoom svg {
    margin-right: 3px;
}

.zoom .caret {
    margin-left: 17px;
}

.taskbar {
    flex: none;
    display: flex;
    align-items: center;
    height: 39px;
    background: linear-gradient(90deg, #34638c, #4682b4 8%, #4682b4 55%, #35648f 72%, #35648f);
    border-top: 1px solid #8fb3d3;
}

.start {
    margin: 0 12px 0 8px;
}

.grip {
    flex: none;
    width: 8px;
    height: 30px;
    background: radial-gradient(circle, #1c3b5a 1px, transparent 1px) 0 0 / 3px 4px;
}

.pins {
    display: flex;
    gap: 28px;
    margin: 0 16px 0 22px;
}

.wins {
    display: flex;
    flex: 1;
    gap: 3px;
}

.wins button {
    display: flex;
    align-items: center;
    justify-content: center;
    width: 59px;
    height: 38px;
    border: 1px solid #24486c;
    border-radius: 3px;
    background: linear-gradient(135deg, #86add0, #5c8ebb);
    box-shadow: inset 0 0 0 1px #a5c3dd;
}

.wins .stack {
    width: 52px;
    margin-right: 6px;
    background: linear-gradient(135deg, #b9d0e4, #7fa8cb);
    box-shadow: inset 0 0 0 1px #d5e4f0, 3px 0 #6e9cc5, 4px 0 #24486c;
}

.wins .current {
    background: linear-gradient(135deg, #dfeaf4, #a3c0da);
    box-shadow: inset 0 0 0 1px #fff;
}

.net {
    width: 115px;
    margin: 0 5px 0 6px;
    background: #b8dce6;
    border: 1px solid #1d2c3c;
    font-family: "DejaVu Sans Condensed", "DejaVu Sans", sans-serif;
}

.net div {
    display: flex;
    align-items: center;
    height: 18px;
    padding-left: 2px;
}

.net span {
    flex: 1;
    text-align: center;
}

.down-rate {
    border-bottom: 1px solid #1d2c3c;
    color: #6b2035;
}

.up-rate {
    color: #14582c;
}

.tray {
    display: flex;
    align-items: center;
    height: 38px;
    border: 1px solid #1f4468;
    border-width: 1px 1px 0 0;
    border-radius: 14px 0 0 0;
    background: linear-gradient(#5882a8, #3a6892);
    box-shadow: inset 1px 1px #86a8c6;
}

.signal {
    width: 93px;
    gap: 6px;
    padding-left: 13px;
    background: linear-gradient(#4a7aa5, #3a6892);
}

.far {
    margin-left: 62px;
}

.kbd {
    margin: 0 12px 0 8px;
}

.power {
    width: 103px;
    gap: 14px;
    padding-left: 12px;
}

.battery {
    position: relative;
    width: 47px;
    height: 20px;
    border: 2px solid #fff;
    background: linear-gradient(#1d8a35, #0b6a20 50%, #16922f);
    color: #fff;
    font-family: "DejaVu Sans Condensed", "DejaVu Sans", sans-serif;
    text-align: center;
}

.battery::after {
    content: "";
    position: absolute;
    right: -6px;
    top: 2px;
    width: 5px;
    height: 11px;
    background: #222;
    border: 1px solid #fff;
    border-left: none;
}

.icons {
    display: flex;
    align-items: center;
    gap: 9px;
    margin: 0 9px 0 6px;
}

.icons svg:first-child {
    margin-right: 3px;
}

.desktop {
    width: 14px;
    height: 38px;
    border: 1px solid #1f4468;
    background: linear-gradient(135deg, #7fa3c4, #41719c);
}

/* dialogs */
.dialog {
    position: absolute;
    display: flex;
    flex-direction: column;
    border: 1px solid #b5b6b9;
    border-radius: 6px 6px 0 0;
    background: #d9dce4;
    box-shadow: 1px 1px 5px rgba(0, 0, 0, 0.3);
    color: #333;
}

.dialog header {
    flex: none;
    display: flex;
    align-items: center;
    justify-content: space-between;
    height: 30px;
    padding: 0 5px 2px 4px;
    border-bottom: 1px solid #b0b1b4;
    border-radius: 6px 6px 0 0;
    background: linear-gradient(#f4f4f4, #dedede);
    box-shadow: 0 1px #f7f7f9;
}

.buttons {
    display: flex;
    justify-content: flex-end;
    gap: 6px;
    padding: 8px 13px;
}

.buttons button {
    width: 75px;
    height: 22px;
    border: 1px solid #b5b7bb;
    border-radius: 2px;
    background: linear-gradient(#fff, #f2f2f2 50%, #dfdfdf 55%, #ededed);
}

.wizard {
    left: 473px;
    top: 193px;
    width: 820px;
    height: 600px;
    background: #d3d5d9;
}

.wizard-frame {
    flex: 1;
    min-height: 0;
    display: flex;
    margin: 7px 6px 0;
    border: 2px solid #8da1bf;
    background: #8da1bf;
}

.steps {
    flex: none;
    width: 160px;
    margin: 0;
    padding: 0;
    list-style: none;
    font-size: 14px;
    line-height: 28px;
    color: #d9dde4;
}

.steps li {
    padding-left: 26px;
    height: 28px;
    white-space: nowrap;
    overflow: hidden;
}

.steps .on {
    margin-bottom: 2px;
    border-radius: 12px 0 0 12px;
    background: #dedfe1;
    color: #9fa1a4;
}

.wizard-page {
    flex: 1;
    min-width: 0;
    display: flex;
    flex-direction: column;
    padding: 8px 1px 0 3px;
    background: #dddee0;
    border: 3px solid #e6e7ea;
    border-width: 3px 5px 6px 3px;
    color: #a2a4a7;
}

.wizard-page fieldset {
    min-width: 0;
    margin: 0;
    padding: 0;
    border: 1px solid #bfc1c5;
}

.access {
    height: 196px;
}

.wizard-page legend {
    height: 15px;
    margin-left: 13px;
    padding: 0 4px;
}

.pick {
    display: flex;
    height: 27px;
    padding: 4px 0 0 4px;
}

.pick label {
    width: 126px;
    line-height: 18px;
}

.pick select {
    width: 130px;
    height: 22px;
    padding: 0 3px;
    appearance: none;
    opacity: 1;
    border: 1px solid #bcbec1;
    border-radius: 0;
    color: #b6b8bb;
    background:
        linear-gradient(45deg, transparent 50%, #8a8c8f 50%) 114px 8px / 4px 5px no-repeat,
        linear-gradient(-45deg, transparent 50%, #8a8c8f 50%) 118px 8px / 4px 5px no-repeat,
        linear-gradient(#bcbec1, #bcbec1) 111px 0 / 1px 22px no-repeat,
        #dfe0e1;
}

.access p {
    margin: 34px 60px 0 0;
    text-align: right;
}

.wizard-page .tunnel {
    flex: 1;
    display: flex;
    flex-direction: column;
    gap: 16px;
    margin-top: 15px;
    padding: 24px 5px 11px;
    border-bottom: none;
}

.box {
    flex: 1;
    display: flex;
    align-items: flex-end;
    padding: 0 4px 9px;
    border: 1px solid #bfc1c5;
}

.wizard .buttons {
    padding: 11px 13px 7px;
}

.wizard .buttons button {
    border-color: #bcbec2;
    background: linear-gradient(#e0e1e2, #dadbdc 50%, #cecfd1 55%, #d8d9da);
    color: #a5a7aa;
}

.pool {
    left: 579px;
    top: 313px;
    width: 608px;
    height: 399px;
}

.pool .tabs {
    flex: none;
    height: 27px;
    padding-left: 5px;
}

.pool .tabs button {
    height: 19px;
    padding: 0 20px 0 17px;
    color: #777;
    background: linear-gradient(#e2e3e6, #c3c4c7);
}

.pool .tabs .on {
    padding: 0 19px 0 13px;
    background: #fff;
    color: #333;
}

.pool-body {
    flex: 1;
    min-height: 0;
    display: flex;
    margin: 0 5px 0 4px;
    border-top: 3px solid #fbfcfd;
    background: #edf0f7;
    overflow: hidden;
}

.pool form {
    flex: 1;
    padding: 8px 0 0 10px;
}

.field {
    display: flex;
    height: 27px;
    color: #444;
}

.field label {
    width: 135px;
    line-height: 20px;
}

.field input {
    width: 130px;
    height: 22px;
    padding: 0 3px;
    border: 1px solid #b5b8bd;
    background: linear-gradient(#f3f3f3, #fff 4px);
    color: #000;
    font-family: "DejaVu Sans Condensed", "DejaVu Sans", sans-serif;
}

.field span {
    margin-left: 30px;
    line-height: 26px;
}

.scrollbar {
    display: flex;
    flex-direction: column;
    align-items: center;
    width: 16px;
    padding-top: 5px;
    background: #f0f0f1;
}

.scrollbar .up {
    border-bottom-color: #333;
}

.scrollbar .down {
    border-top-color: #333;
    margin-top: 33px;
}

.thumb {
    display: flex;
    align-items: center;
    justify-content: center;
    width: 15px;
    height: 240px;
    margin-top: 7px;
    border: 1px solid #8f9094;
    border-radius: 2px;
    background: linear-gradient(90deg, #f3f3f4, #dadadd 50%, #b9babf);
}

.thumb b {
    width: 7px;
    height: 8px;
    background: repeating-linear-gradient(#555 0 1px, #eee 1px 3px);
}

.pool .buttons {
    height: 37px;
}
```
